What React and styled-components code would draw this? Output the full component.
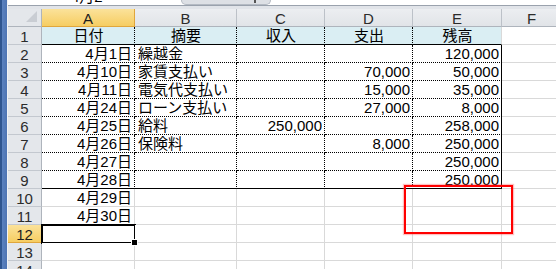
import React from 'react'
import styled, {createGlobalStyle, css} from 'styled-components'

const GlobalStyle = createGlobalStyle`
    html, body {
        margin: 0;
        padding: 0;
        background: #fff;
        overflow: hidden;
    }
    body {
        font-family: "Liberation Sans", "Noto Sans CJK JP", sans-serif;
    }
`

const columns = ['A', 'B', 'C', 'D', 'E', 'F']

const rows = [
    ['日付', '摘要', '収入', '支出', '残高'],
    ['4月1日', '繰越金', '', '', '120,000'],
    ['4月10日', '家賃支払い', '', '70,000', '50,000'],
    ['4月11日', '電気代支払い', '', '15,000', '35,000'],
    ['4月24日', 'ローン支払い', '', '27,000', '8,000'],
    ['4月25日', '給料', '250,000', '', '258,000'],
    ['4月26日', '保険料', '', '8,000', '250,000'],
    ['4月27日', '', '', '', '250,000'],
    ['4月28日', '', '', '', '250,000'],
    ['4月29日', '', '', '', ''],
    ['4月30日', '', '', '', ''],
    ['', '', '', '', ''],
    ['', '', '', '', ''],
    ['', '', '', '', ''],
]

const SELECTED_ROW = 12

// border style for a cell inside the table range A1:E9
function cellBorders(r, c) {
    if (c > 4 || r > 9) return {right: 'grid', bottom: 'grid'}
    let right = c < 4 ? 'dot' : (r === 1 ? 'grid' : 'solid')
    let bottom = r === 1 || r === 9 ? 'solid' : 'dot'
    return {right, bottom}
}

function alignFor(r, c) {
    if (r === 1) return 'center'
    if (c === 1) return 'left'
    return 'right'
}

function App() {
    return (
        <>
            <GlobalStyle />
            <Window>
                <Frame />
                <Main>
                    <FormulaStrip>
                        <NameText>4月2</NameText>
                        <ExpandTab><TabMark /></ExpandTab>
                    </FormulaStrip>
                    <StripGap />
                    <Sheet>
                        <Corner><CornerTriangle /></Corner>
                        {columns.map((col, i) => (
                            <ColHeader key={col} $active={i === 0}>{col}</ColHeader>
                        ))}
                        {rows.map((row, ri) => {
                            const r = ri + 1
                            return (
                                <React.Fragment key={r}>
                                    <RowHeader $active={r === SELECTED_ROW}>{r}</RowHeader>
                                    {row.map((val, ci) => {
                                        const b = cellBorders(r, ci)
                                        return (
                                            <Cell
                                                key={ci}
                                                $right={b.right}
                                                $bottom={b.bottom}
                                                $fill={r === 1 ? '#daeef3' : null}
                                                $align={alignFor(r, ci)}
                                                $selected={r === SELECTED_ROW && ci === 0}
                                            >
                                                {val}
                                                {r === SELECTED_ROW && ci === 0 && <FillHandle />}
                                            </Cell>
                                        )
                                    })}
                                    <Cell $right="grid" $bottom="grid" />
                                </React.Fragment>
                            )
                        })}
                    </Sheet>
                    <Callout />
                </Main>
            </Window>
        </>
    )
}

const Window = styled.div`
    display: flex;
    width: 556px;
    height: 269px;
    overflow: hidden;
    position: relative;
`

const Frame = styled.div`
    width: 7px;
    flex: none;
    background: linear-gradient(to right, #2e558f 0, #2e558f 2px, #5b82bf 2px, #4d74b3 7px);
    border-right: 1px solid #f1f3f6;
`

const Main = styled.div`
    flex: 1;
    display: flex;
    flex-direction: column;
    min-width: 0;
`

const FormulaStrip = styled.div`
    height: 5px;
    background: #fff;
    border-bottom: 1px solid #9aa2ad;
    display: flex;
    overflow: hidden;
    flex: none;
`

const NameText = styled.span`
    margin-left: 63px;
    margin-top: -11px;
    font-size: 15px;
    line-height: 15px;
    color: #000;
    width: 110px;
`

const ExpandTab = styled.div`
    width: 74px;
    height: 4px;
    margin-top: 0;
    background: #dde0e5;
    border: 1px solid #b4bac3;
    border-top: none;
    border-radius: 0 0 9px 9px;
    display: flex;
    justify-content: flex-end;
    padding-right: 14px;
    box-sizing: content-box;
`

const TabMark = styled.div`
    width: 2px;
    height: 3px;
    background: #555;
`

const StripGap = styled.div`
    height: 3px;
    background: #e1e4e9;
    flex: none;
`

const Sheet = styled.div`
    display: grid;
    grid-template-columns: 34px 93px 102px 88px 88px 89px 60px;
    grid-auto-rows: 18px;
    font-size: 15px;
    color: #000;
`

const headerBase = css`
    box-sizing: border-box;
    display: flex;
    align-items: center;
    justify-content: center;
    font-size: 15px;
    color: #2b2b2b;
    padding-top: 1px;
`

const activeHeader = css`
    background: linear-gradient(#fbe29a, #f6cd62);
    color: #1d1d1d;
`

const Corner = styled.div`
    ${headerBase};
    position: relative;
    background: #e4e7eb;
    border-right: 1px solid #aeb4bc;
    border-bottom: 1px solid #aeb4bc;
`

const CornerTriangle = styled.div`
    position: absolute;
    right: 4px;
    bottom: 4px;
    width: 0;
    height: 0;
    border-left: 11px solid transparent;
    border-bottom: 11px solid #c9cdd3;
`

const ColHeader = styled.div`
    ${headerBase};
    background: linear-gradient(#eceef1, #e1e4e8);
    border-right: 1px solid ${(p) => (p.$active ? '#e0a63c' : '#bcc1c8')};
    border-bottom: 1px solid ${(p) => (p.$active ? '#e0a63c' : '#aeb4bc')};
    ${(p) => p.$active && activeHeader};
`

const RowHeader = styled.div`
    ${headerBase};
    background: #e4e7eb;
    border-right: 1px solid ${(p) => (p.$active ? '#e0a63c' : '#aeb4bc')};
    border-bottom: 1px solid ${(p) => (p.$active ? '#e0a63c' : '#c3c8cf')};
    ${(p) => p.$active && activeHeader};
`

const lineStyle = (kind) => {
    if (kind === 'dot') return '1px dotted #000'
    if (kind === 'solid') return '1px solid #000'
    return '1px solid #d9d9d9'
}

const Cell = styled.div`
    box-sizing: border-box;
    position: relative;
    display: flex;
    align-items: flex-end;
    justify-content: ${(p) => (p.$align === 'center' ? 'center' : p.$align === 'left' ? 'flex-start' : 'flex-end')};
    padding: 0 2px 0 3px;
    background: ${(p) => p.$fill || '#fff'};
    border-right: ${(p) => lineStyle(p.$right)};
    border-bottom: ${(p) => lineStyle(p.$bottom)};
    line-height: 17px;
    white-space: nowrap;
    ${(p) => p.$selected && css`
        &::after {
            content: '';
            position: absolute;
            left: -1px;
            top: -1px;
            right: -2px;
            bottom: -2px;
            border: 2px solid #000;
            pointer-events: none;
        }
    `}
`

const FillHandle = styled.span`
    position: absolute;
    right: -4px;
    bottom: -4px;
    width: 5px;
    height: 5px;
    background: #000;
    border: 1px solid #fff;
    z-index: 2;
`

const Callout = styled.div`
    position: absolute;
    left: 404px;
    top: 185px;
    width: 109px;
    height: 49px;
    box-sizing: border-box;
    border: 2px solid #ff0000;
    box-shadow: 0 0 1px 1px rgba(255, 80, 80, 0.35);
`

export default App
